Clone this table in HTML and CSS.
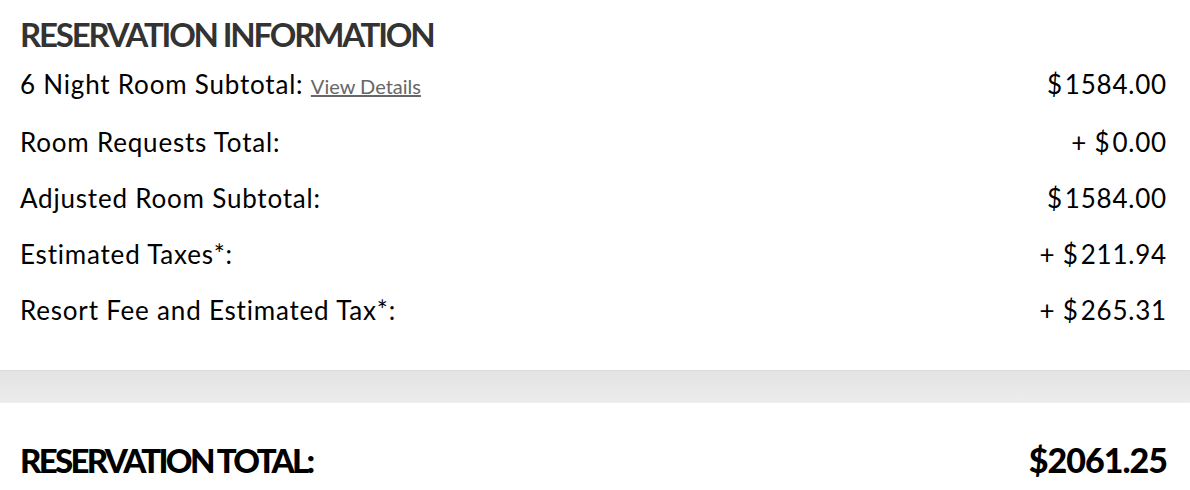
FILE: index.html
```html
<!DOCTYPE html>
<html>
<head>
<meta charset="utf-8">
<link rel="stylesheet" href="styles.css">
</head>
<body>
<section class="info">
  <h2 class="title">RESERVATION INFORMATION</h2>
  <div class="row">
    <span class="label">6 Night Room Subtotal: <a class="details" href="#">View Details</a></span>
    <span class="amount"><span class="cur">$</span>1584.00</span>
  </div>
  <div class="row">
    <span class="label">Room Requests Total:</span>
    <span class="amount">+ <span class="cur">$</span>0.00</span>
  </div>
  <div class="row">
    <span class="label">Adjusted Room Subtotal:</span>
    <span class="amount"><span class="cur">$</span>1584.00</span>
  </div>
  <div class="row">
    <span class="label">Estimated Taxes*:</span>
    <span class="amount">+ <span class="cur">$</span>211.94</span>
  </div>
  <div class="row">
    <span class="label">Resort Fee and Estimated Tax*:</span>
    <span class="amount">+ <span class="cur">$</span>265.31</span>
  </div>
</section>
<div class="divider"></div>
<section class="total">
  <span class="total-label">RESERVATION TOTAL:</span>
  <span class="total-amount">$2061.25</span>
</section>
</body>
</html>
```

FILE: styles.css
```css
html, body {
  margin: 0;
  padding: 0;
  background: #fff;
}
body {
  font-family: Lato, "Liberation Sans", sans-serif;
  color: #000;
  width: 1190px;
  height: 490px;
  overflow: hidden;
}
.info {
  padding: 12px 23px 0 20px;
  height: 358px;
  box-sizing: border-box;
}
.title {
  margin: 0;
  font-size: 33px;
  line-height: 44px;
  font-weight: 700;
  color: #333;
  letter-spacing: -2.2px;
}
.row {
  display: flex;
  justify-content: space-between;
  align-items: baseline;
  font-size: 26px;
  line-height: 56px;
  letter-spacing: 0.8px;
}
.details {
  font-size: 20px;
  letter-spacing: 0;
  color: #666;
  text-decoration: underline;
}
.cur {
  margin-right: 2px;
}
.divider {
  height: 31px;
  margin-top: 12px;
  border-top: 1px solid #dcdcdc;
  border-bottom: 1px solid #f0f0f0;
  background: linear-gradient(#e3e3e3, #ececec);
}
.total {
  display: flex;
  justify-content: space-between;
  align-items: baseline;
  padding: 36px 23px 0 20px;
  font-size: 34px;
  font-weight: 900;
}
.total-label {
  font-size: 33px;
  letter-spacing: -2.7px;
}
.total-amount {
  letter-spacing: -1px;
}
```
